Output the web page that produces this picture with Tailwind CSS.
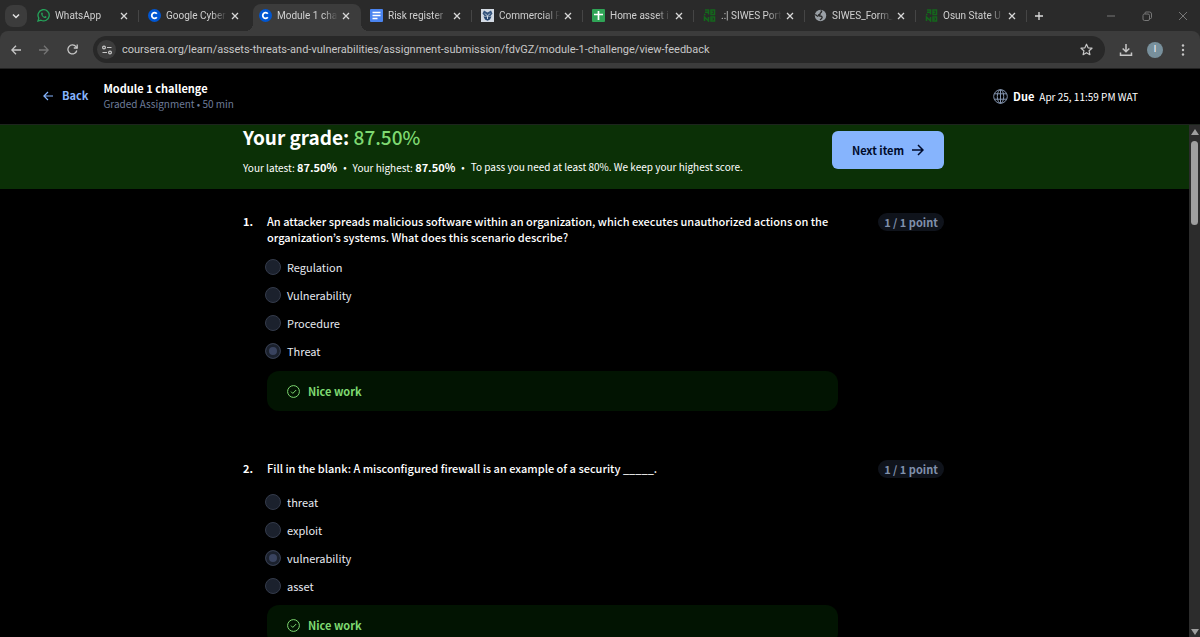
<!DOCTYPE html>
<html lang="en">
<head>
    <meta charset="UTF-8">
    <meta name="viewport" content="width=device-width, initial-scale=1.0">
    <title>Module 1 challenge | Coursera</title>
    <script src="https://cdn.jsdelivr.net/npm/@tailwindcss/browser@4"></script>
</head>
<body class="flex h-screen flex-col overflow-hidden bg-black font-['Noto_Sans_CJK_KR',sans-serif] text-white">
    <div class="shrink-0 bg-[#2a2a2a] font-['Roboto',sans-serif]">
        <!-- Tab strip -->
        <div class="flex h-[31px] items-center pl-[5px] text-[10px] text-[#d0d0d0]">
            <button aria-label="Search tabs" class="mr-1 flex size-[22px] shrink-0 items-center justify-center rounded-lg bg-[#3c3c3c]">
                <svg class="size-2" viewBox="0 0 8 8" fill="none" stroke="#e3e3e3" stroke-width="1.5"><path d="M1 2.5 4 5.5 7 2.5"/></svg>
            </button>
            <nav id="tabs" class="flex min-w-0 flex-1 gap-[3px] self-stretch"></nav>
            <div class="flex shrink-0 items-center gap-[26px] pr-3 text-[#777]">
                <svg class="size-[10px]" viewBox="0 0 10 10" stroke="currentColor"><path d="M1 5h8"/></svg>
                <svg class="size-[10px]" viewBox="0 0 10 10" fill="none" stroke="currentColor"><rect x="1" y="3" width="6.5" height="6.5" rx="1.5"/><path d="M3 3V2a1 1 0 0 1 1-1h3.500a2 2 0 0 1 2 2v3.500a1 1 0 0 1-1 1h-1"/></svg>
                <svg class="size-[10px]" viewBox="0 0 10 10" stroke="currentColor"><path d="m1 1 8 8M9 1 1 9"/></svg>
            </div>
        </div>

        <!-- Toolbar -->
        <div class="flex h-[38px] items-center rounded-t-lg border-b border-[#222] bg-[#3c3c3c] pr-[11px] text-[#c7c7c7]">
            <div class="flex w-[93px] shrink-0 items-center gap-[18px] pl-[11px]">
                <button aria-label="Back"><svg class="size-[10px]" viewBox="0 0 10 10" fill="none" stroke="currentColor" stroke-width="1.300"><path d="M10 5H1M5 .7.800 5 5 9.300"/></svg></button>
                <button aria-label="Forward"><svg class="size-[10px]" viewBox="0 0 10 10" fill="none" stroke="#757575" stroke-width="1.300"><path d="M0 5h9M5 .7 9.200 5 5 9.300"/></svg></button>
                <button aria-label="Reload"><svg class="size-[11px]" viewBox="0 0 11 11" fill="none" stroke="currentColor" stroke-width="1.300"><path d="M9.800 6.500A4.500 4.500 0 1 1 9 2.700L10 4"/><path d="M10.200.6V4H6.800"/></svg></button>
            </div>
            <div class="flex h-[27px] min-w-0 flex-1 items-center rounded-full bg-[#282828] pr-3 pl-1">
                <button aria-label="Site information" class="mr-[6px] flex size-[19px] shrink-0 items-center justify-center rounded-full bg-[#3c3c3c]">
                    <svg class="size-[10px]" viewBox="0 0 10 10" fill="none" stroke="currentColor" stroke-width="1.200"><circle cx="2" cy="2.500" r="1.400"/><path d="M5 2.500h4.500M.5 7.500H5"/><circle cx="8" cy="7.500" r="1.400"/></svg>
                </button>
                <input aria-label="Address" type="text" class="min-w-0 flex-1 bg-transparent pt-0.5 text-[11px] outline-none" value="coursera.org/learn/assets-threats-and-vulnerabilities/assignment-submission/fdvGZ/module-1-challenge/view-feedback">
                <button aria-label="Bookmark"><svg class="size-[13px]" viewBox="0 0 13 13" fill="none" stroke="currentColor" stroke-width="1.200" stroke-linejoin="round"><path d="m6.500 1.200 1.600 3.600 3.900.4-2.900 2.600.8 3.900-3.400-2-3.400 2 .8-3.900L1 5.200l3.900-.4z"/></svg></button>
            </div>
            <div class="flex shrink-0 items-center gap-[14px] pl-[14px]">
                <button aria-label="Downloads"><svg class="size-[14px]" viewBox="0 0 14 14" fill="none" stroke="currentColor" stroke-width="1.500"><path d="M7 1v7.500M3.700 5.500 7 8.800l3.300-3.300M1.500 9.500v2.800h11V9.500"/></svg></button>
                <button class="flex size-4 items-center justify-center rounded-full bg-[#78909c] text-[9px] text-white">I</button>
                <button aria-label="Menu" class="px-1"><svg class="h-3 w-1" viewBox="0 0 4 12" fill="currentColor"><circle cx="2" cy="1.500" r="1.200"/><circle cx="2" cy="6" r="1.200"/><circle cx="2" cy="10.500" r="1.200"/></svg></button>
            </div>
        </div>
    </div>

    <!-- Assignment header -->
    <header class="flex h-[56px] shrink-0 items-center border-b border-[#1d241d] pr-[62px] pl-[43px] text-[11px]">
        <div class="flex items-center gap-[15px] pb-0.5">
            <a href="#" class="flex items-center gap-[9px] font-bold text-[#86b4fd]">
                <svg class="size-[10px]" viewBox="0 0 10 10" fill="none" stroke="currentColor" stroke-width="1.200"><path d="M10 5H1M5 1 .900 5 5 9"/></svg>
                Back
            </a>
            <div>
                <h1 class="leading-4 font-bold">Module 1 challenge</h1>
                <p class="text-[10px] leading-4 text-[#6d7c99]">Graded Assignment • 50 min</p>
            </div>
        </div>
        <div class="ml-auto flex items-center gap-[5px]">
            <svg class="size-[15px]" viewBox="0 0 15 15" fill="none" stroke="#8495b0"><circle cx="7.500" cy="7.500" r="6.800"/><ellipse cx="7.500" cy="7.500" rx="3.200" ry="6.800"/><path d="M7.500.7v13.600M1.500 4.800h12M1.500 10.200h12"/></svg>
            <span class="font-bold">Due</span>
            <span class="text-[10px]">Apr 25, 11:59 PM WAT</span>
        </div>
    </header>

    <div class="flex min-h-0 flex-1">
        <main class="min-w-0 flex-1 overflow-hidden">
            <!-- Grade banner -->
            <section class="h-16 bg-[#0b3006] pr-0.5">
                <div class="mx-auto flex max-w-[701px] items-start justify-between">
                    <div>
                        <h2 class="text-[19px] leading-6 font-bold">Your grade: <span class="font-medium text-[#7ed971]">87.50%</span></h2>
                        <p class="mt-[10px] flex gap-[6px] text-[10px] leading-4">
                            <span>Your latest: <b class="text-[11px]">87.50%</b></span>
                            <span>•</span>
                            <span>Your highest: <b class="text-[11px]">87.50%</b></span>
                            <span>•</span>
                            <span>To pass you need at least 80%. We keep your highest score.</span>
                        </p>
                    </div>
                    <button class="mt-[6px] flex h-[38px] w-28 items-center justify-center gap-2 rounded-md bg-[#86b4fd] text-[11px] font-bold text-[#000b2b]">
                        Next item
                        <svg class="size-3" viewBox="0 0 12 12" fill="none" stroke="currentColor" stroke-width="1.500"><path d="M0 6h11M6 1l5 5-5 5"/></svg>
                    </button>
                </div>
            </section>

            <!-- Questions -->
            <div class="pt-6 pr-0.5">
                <div class="mx-auto flex max-w-[701px] flex-col gap-[49px] text-[11px]">
                    <section class="flex items-start">
                        <span class="w-6 shrink-0 leading-4 font-bold">1.</span>
                        <fieldset class="min-w-0 flex-1">
                            <legend class="mb-2 leading-4 font-medium">An attacker spreads malicious software within an organization, which executes unauthorized actions on the organization’s systems. What does this scenario describe?</legend>
                            <div class="-ml-0.5 text-[#e6e9f0]">
                                <label class="flex h-7 items-center gap-[6px]"><input type="radio" name="q1" class="size-4 appearance-none rounded-full border border-[#343b4b] bg-[#1b212d]">Regulation</label>
                                <label class="flex h-7 items-center gap-[6px]"><input type="radio" name="q1" class="size-4 appearance-none rounded-full border border-[#343b4b] bg-[#1b212d]">Vulnerability</label>
                                <label class="flex h-7 items-center gap-[6px]"><input type="radio" name="q1" class="size-4 appearance-none rounded-full border border-[#343b4b] bg-[#1b212d]">Procedure</label>
                                <label class="flex h-7 items-center gap-[6px]"><input type="radio" name="q1" checked class="size-4 appearance-none rounded-full border border-[#343b4b] bg-[#39435f] shadow-[inset_0_0_0_3px_#1b212d]">Threat</label>
                            </div>
                            <div class="mt-[6px] flex h-10 items-center gap-2 rounded-xl bg-[#021402] pl-5 font-bold text-[#7ed971]">
                                <svg class="size-[13px]" viewBox="0 0 13 13" fill="none" stroke="currentColor"><circle cx="6.500" cy="6.500" r="5.900"/><path d="m4 6.600 1.800 1.800L9.200 5"/></svg>
                                Nice work
                            </div>
                        </fieldset>
                        <span class="ml-10 flex h-[18px] w-[66px] items-center justify-center rounded-full bg-[#0f131b] font-bold text-[#8090ab]">1 / 1 point</span>
                    </section>

                    <section class="flex items-start">
                        <span class="w-6 shrink-0 leading-4 font-bold">2.</span>
                        <fieldset class="min-w-0 flex-1">
                            <legend class="mb-3 leading-4 font-medium">Fill in the blank: A misconfigured firewall is an example of a security _____.</legend>
                            <div class="-ml-0.5 text-[#e6e9f0]">
                                <label class="flex h-7 items-center gap-[6px]"><input type="radio" name="q2" class="size-4 appearance-none rounded-full border border-[#343b4b] bg-[#1b212d]">threat</label>
                                <label class="flex h-7 items-center gap-[6px]"><input type="radio" name="q2" class="size-4 appearance-none rounded-full border border-[#343b4b] bg-[#1b212d]">exploit</label>
                                <label class="flex h-7 items-center gap-[6px]"><input type="radio" name="q2" checked class="size-4 appearance-none rounded-full border border-[#343b4b] bg-[#39435f] shadow-[inset_0_0_0_3px_#1b212d]">vulnerability</label>
                                <label class="flex h-7 items-center gap-[6px]"><input type="radio" name="q2" class="size-4 appearance-none rounded-full border border-[#343b4b] bg-[#1b212d]">asset</label>
                            </div>
                            <div class="mt-[5px] flex h-10 items-center gap-2 rounded-xl bg-[#021402] pl-5 font-bold text-[#7ed971]">
                                <svg class="size-[13px]" viewBox="0 0 13 13" fill="none" stroke="currentColor"><circle cx="6.500" cy="6.500" r="5.900"/><path d="m4 6.600 1.800 1.800L9.200 5"/></svg>
                                Nice work
                            </div>
                        </fieldset>
                        <span class="ml-10 flex h-[18px] w-[66px] items-center justify-center rounded-full bg-[#0f131b] font-bold text-[#8090ab]">1 / 1 point</span>
                    </section>
                </div>
            </div>
        </main>

        <!-- Scrollbar -->
        <div class="flex w-[11px] shrink-0 flex-col items-center bg-[#2c2c2c] pt-1 pb-0.5">
            <svg class="h-[6px] w-2" viewBox="0 0 8 6" fill="#9f9f9f"><path d="M4 0l4 6H0z"/></svg>
            <div class="mt-[6px] h-[84px] w-[7px] rounded-full bg-[#9f9f9f]"></div>
            <svg class="mt-auto h-[6px] w-2" viewBox="0 0 8 6" fill="#9f9f9f"><path d="M4 6 0 0h8z"/></svg>
        </div>
    </div>

    <script>
        const coursera = '<circle cx="6.500" cy="6.500" r="6.500" fill="#0056d2"/><path d="M8.800 8.200A2.800 2.800 0 1 1 8.800 4.800" fill="none" stroke="#fff" stroke-width="1.800"/>';
        const uniosun = '<g fill="none" stroke="#14671c" stroke-width="1.500"><path d="M2 1h3.500v4.500M2 3.200h3.500M1 5.500h1.500M8 1h3.500v4.500H8zM8 3.200h2M1.500 12V8l4 4V8M8 8h3.500v4H8zM8 10h2"/></g>';
        const tabs = [
            { title: 'WhatsApp', icon: '<path d="M1 12l.8-2.900A5.600 5.600 0 1 1 4 11.200z" fill="none" stroke="#25a35a" stroke-width="1.300"/><path d="M4.500 3.700c-1.400 1.300 1.600 5.600 4.100 5.300 1-.1 1.200-1.200.6-1.500l-1-.5-.7.700C6.500 7.300 5.700 6.500 5.400 5.700l.6-.7-.6-1.200c-.2-.3-.6-.4-.9-.1z" fill="#25a35a"/>' },
            { title: 'Google Cyber', icon: coursera },
            { title: 'Module 1 cha', icon: coursera, active: true },
            { title: 'Risk register', icon: '<rect width="13" height="13" rx="1" fill="#4a84f0"/><path d="M2.500 3.500h8M2.500 6.500h8M2.500 9.500h5" stroke="#fff" stroke-width="1.400"/>' },
            { title: 'Commercial F', icon: '<rect width="13" height="13" fill="#d3dae3"/><path d="M3 1.500 6.500 3.500 10 1.500 11.500 4.500 9.500 7H3.500L1.500 4.500z" fill="#35557e"/><path d="M2.500 7.500h8L9 10.500l-2.500 1.200L4 10.500z" fill="#27466f"/><path d="M4 4.500 6.500 7 9 4.500M6.500 7v3" fill="none" stroke="#c6d2e0"/>' },
            { title: 'Home asset i', icon: '<rect width="13" height="13" rx="1" fill="#2fa456"/><path d="M2 5.500h9M6.500 2v9" stroke="#fff" stroke-width="1.700"/>' },
            { title: '.:| SIWES Port', icon: uniosun },
            { title: 'SIWES_Form_', icon: '<circle cx="6.500" cy="6.500" r="5.700" fill="#9aa0a6"/><path d="M6.500 1.800c2 0 1 1.500 0 2s.500 1.700-1 1.700-1 1.500.5 1.500 2.500.5 2 1.800-1.500 1-1.800 2.400M1.200 5.500l2.800 2" fill="none" stroke="#2a2a2a" stroke-width="1.300"/>' },
            { title: 'Osun State U', icon: uniosun }
        ];

        tabs.forEach((tab, i) => {
            const item = document.createElement('div');
            item.className = 'relative flex min-w-0 max-w-[108px] flex-1 items-center pl-[6px]';
            if (tab.active) item.className += ' mt-1 rounded-t-lg bg-[#3c3c3c] pb-1';
            const nextActive = tabs[i + 1] && tabs[i + 1].active;
            // flared feet under the active tab
            const feet = `
                <span class="absolute bottom-0 -left-2 size-2 bg-[radial-gradient(circle_at_top_left,transparent_8px,#3c3c3c_8px)]"></span>
                <span class="absolute -right-2 bottom-0 size-2 bg-[radial-gradient(circle_at_top_right,transparent_8px,#3c3c3c_8px)]"></span>`;
            item.innerHTML = `
                <svg class="mr-[5px] size-[13px] shrink-0" viewBox="0 0 13 13">${tab.icon}</svg>
                <a href="#" class="min-w-0 flex-1 overflow-hidden whitespace-nowrap [mask-image:linear-gradient(to_right,#000_75%,transparent)]">${tab.title}</a>
                <button aria-label="Close tab" class="mr-[10px] ml-1"><svg class="size-2" viewBox="0 0 8 8" stroke="#d8d8d8" stroke-width="1.300"><path d="m1 1 6 6M7 1 1 7"/></svg></button>
                <span class="h-3 w-px ${tab.active || nextActive ? '' : 'bg-[#454545]'}"></span>
                ${tab.active ? feet : ''}`;
            document.getElementById('tabs').appendChild(item);
        });

        const add = document.createElement('button');
        add.setAttribute('aria-label', 'New tab');
        add.className = 'px-1';
        add.innerHTML = '<svg class="size-[10px]" viewBox="0 0 10 10" stroke="#dcdcdc" stroke-width="1.300"><path d="M5 1v8M1 5h8"/></svg>';
        document.getElementById('tabs').appendChild(add);
    </script>
</body>
</html>
